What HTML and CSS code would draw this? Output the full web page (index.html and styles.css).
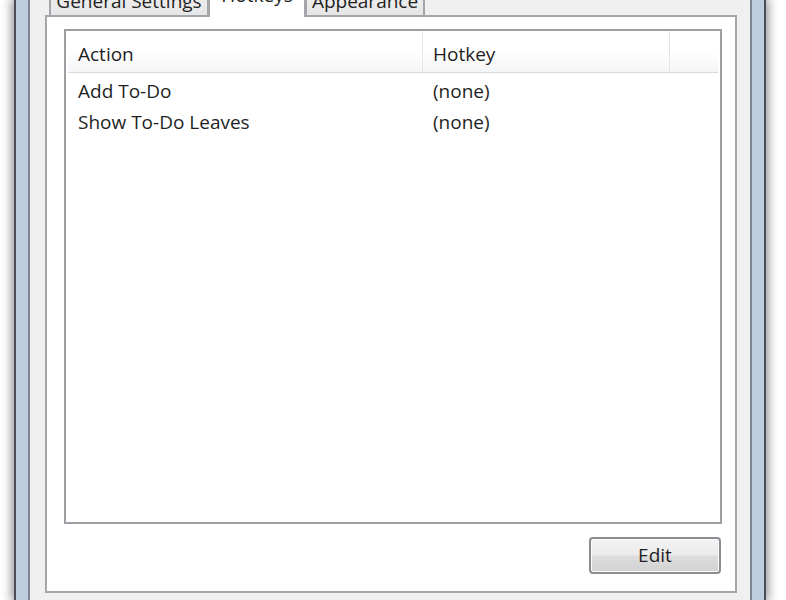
FILE: index.html
```html
<!DOCTYPE html>
<html>
<head>
<meta charset="utf-8">
<link rel="stylesheet" href="styles.css">
</head>
<body>
<div class="window">
  <div class="dialog">
    <div class="tabstrip">
      <div class="tab tab-general">General Settings</div>
      <div class="tab tab-active">Hotkeys</div>
      <div class="tab tab-appearance">Appearance</div>
    </div>
    <div class="panel">
      <div class="listbox">
        <div class="header">
          <div class="hcell col-action">Action</div>
          <div class="hcell col-hotkey">Hotkey</div>
          <div class="hcell col-fill"></div>
        </div>
        <div class="rows">
          <div class="row"><div class="cell col-action">Add To-Do</div><div class="cell col-hotkey">(none)</div></div>
          <div class="row"><div class="cell col-action">Show To-Do Leaves</div><div class="cell col-hotkey">(none)</div></div>
        </div>
      </div>
      <div class="actions">
        <button class="btn">Edit</button>
      </div>
    </div>
  </div>
</div>
</body>
</html>
```

FILE: styles.css
```css
html, body {
  margin: 0;
  padding: 0;
  background: #ffffff;
  overflow: hidden;
  height: 600px;
}

body {
  font-family: "Open Sans", "Noto Sans", sans-serif;
  font-size: 19px;
  color: #1f1f1f;
}

.window {
  margin-left: 14px;
  width: 752px;
  height: 600px;
  box-sizing: border-box;
  border-left: 2px solid #4a4f57;
  border-right: 2px solid #4a4f57;
  padding: 0 12px;
  background: linear-gradient(to right, #bfcde0, #d3deeb 50%, #bfcde0);
  box-shadow: 0 0 10px 2px rgba(0, 0, 0, 0.45);
}

.dialog {
  height: 100%;
  box-sizing: border-box;
  border-left: 2px solid #7d8590;
  border-right: 2px solid #7d8590;
  background: #f0f0f0;
  padding: 0 13px 0 15px;
}

.tabstrip {
  height: 15px;
  display: flex;
  align-items: flex-end;
  padding-left: 4px;
  position: relative;
  z-index: 2;
}

.tab {
  box-sizing: border-box;
  height: 32px;
  border: 2px solid #a2a5aa;
  border-bottom: none;
  background: linear-gradient(#f2f2f2, #e6e6e6);
  line-height: 1;
  padding: 0 0 4px;
  display: flex;
  align-items: flex-end;
  justify-content: center;
  white-space: nowrap;
}

.tab-general {
  width: 160px;
}

.tab-active {
  width: 98px;
  height: 36px;
  margin-bottom: -2px;
  margin-left: -1px;
  margin-right: -1px;
  background: #ffffff;
  padding-bottom: 12px;
  position: relative;
  z-index: 3;
}

.tab-appearance {
  width: 120px;
}

.panel {
  box-sizing: border-box;
  height: 578px;
  border: 2px solid #a2a5aa;
  background: #ffffff;
  padding: 12px 13px 0 17px;
  display: flex;
  flex-direction: column;
}

.listbox {
  box-sizing: border-box;
  height: 495px;
  border: 2px solid #9c9fa4;
  background: #ffffff;
  padding: 0 2px;
}

.header {
  display: flex;
  height: 41px;
  border-bottom: 1px solid #d8dadd;
  background: linear-gradient(#ffffff 0%, #ffffff 50%, #f4f5f6 100%);
}

.hcell {
  box-sizing: border-box;
  padding-left: 10px;
  padding-top: 12px;
  line-height: 22px;
  border-right: 1px solid #e3e5e8;
}

.col-action {
  width: 355px;
  box-sizing: border-box;
}

.col-hotkey {
  width: 247px;
  box-sizing: border-box;
}

.col-fill {
  flex: 1;
  border-right: none;
}

.rows {
  padding-top: 2px;
}

.row {
  display: flex;
  height: 31px;
  align-items: center;
}

.cell {
  padding-left: 10px;
  line-height: 22px;
}

.actions {
  display: flex;
  justify-content: flex-end;
  margin-top: 13px;
  padding-right: 1px;
}

.btn {
  box-sizing: border-box;
  width: 132px;
  height: 37px;
  border: 2px solid #8a8d92;
  border-radius: 4px;
  background: linear-gradient(#f4f4f4 0%, #ebebeb 48%, #dddddd 52%, #d2d2d2 100%);
  box-shadow: inset 0 0 0 1px #fbfbfb;
  font-family: inherit;
  font-size: 19px;
  color: #1f1f1f;
  padding: 0;
  line-height: 1;
}
```
